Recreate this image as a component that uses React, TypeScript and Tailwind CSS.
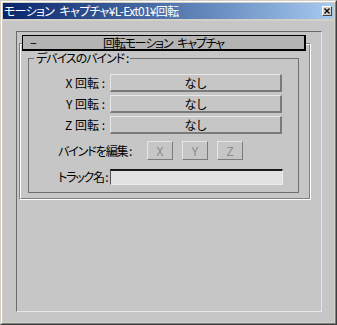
import React from "react";

const font = "font-['Noto_Sans_CJK_JP',sans-serif] [font-feature-settings:'palt']";

function NoneButton() {
  return (
    <div className="w-[172px] h-[18px] flex items-center justify-center border-t border-l border-t-[#e8e8e8] border-l-[#e8e8e8] border-r-2 border-b-2 border-r-[#7a7a7a] border-b-[#7a7a7a] bg-[#c6c6c6] text-[12px] leading-none text-black">
      なし
    </div>
  );
}

function AxisButton({ label }: { label: string }) {
  return (
    <div className="w-[26px] h-[19px] flex items-center justify-center border-t border-l border-t-[#e6e6e6] border-l-[#e6e6e6] border-r border-b border-r-[#7c7c7c] border-b-[#7c7c7c] text-[12px] leading-none text-[#8c8c8c]">
      {label}
    </div>
  );
}

export default function App() {
  return (
    <div className={`${font} w-[337px] h-[325px] flex flex-col border border-t-[#d4d0c8] border-l-[#d4d0c8] border-r-[#404040] border-b-[#404040]`}>
      <div className="flex-1 flex flex-col border border-t-white border-l-white border-r-[#808080] border-b-[#808080] bg-[#d4d0c8] p-px">
        {/* Title bar */}
        <div className="h-[16px] flex items-center justify-between bg-gradient-to-r from-[#0a246a] to-[#a6caf0] pl-[1px] pr-[2px]">
          <span className="text-white text-[12px] leading-none whitespace-nowrap tracking-[-0.7px]">
            モーション{"\u2002"}キャプチャ¥L-Ext01¥回転
          </span>
          <div className="w-[10px] h-[10px] flex items-center justify-center bg-[#d4d0c8] border-t border-l border-t-white border-l-white border-r border-b border-r-[#404040] border-b-[#404040]">
            <svg width="6" height="6" viewBox="0 0 6 6">
              <path d="M0.5 0.5 L5.5 5.5 M5.5 0.5 L0.5 5.5" stroke="#000" strokeWidth="1.2" />
            </svg>
          </div>
        </div>
        {/* Body */}
        <div className="mt-[2px] flex-1 flex flex-col bg-[#c6c6c6] pt-[10px] pl-[13px] pr-[12px] pb-[10px]">
          <div className="flex-1 border-l border-t border-l-[#6a6a6a] border-t-[#6a6a6a] border-r border-b border-r-[#e6e6e6] border-b-[#e6e6e6] pt-[3px] pl-[2px]">
            <div className="w-[292px]">
              {/* Rollout header */}
              <div className="relative z-10 ml-[3px] w-[284px] h-[16px] flex items-center bg-[#b4b4b4] border-l border-t border-black border-r-2 border-b-2 text-[12px] leading-none text-black">
                <span className="pl-[7px] w-[20px]">−</span>
                <span className="flex-1 text-center pr-[20px] whitespace-nowrap tracking-[-1.2px]">回転モーション{"\u2002"}キャプチャ</span>
              </div>
              {/* Rollout frame */}
              <div className="-mt-[8px] border-l border-t border-l-[#808080] border-t-[#808080] border-r border-b border-r-white border-b-white">
                <div className="border-l border-t border-l-white border-t-white border-r border-b border-r-[#808080] border-b-[#808080] pt-[6px] pl-[7px] pr-[10px] pb-[5px]">
                  <fieldset className="border border-[#707070] pb-[7px]">
                    <legend className="ml-[5px] px-[2px] text-[12px] leading-[14px] text-black whitespace-nowrap tracking-[-1px]">
                      デバイスのバインド :
                    </legend>
                    <div className="pt-[9px] flex flex-col gap-[3px]">
                      {["X", "Y", "Z"].map((a) => (
                        <div key={a} className="flex items-center">
                          <div className="w-[77px] text-right text-[12px] leading-none text-black pr-[1px] whitespace-nowrap">
                            {a} 回転 :
                          </div>
                          <div className="ml-[4px]">
                            <NoneButton />
                          </div>
                        </div>
                      ))}
                    </div>
                    <div className="mt-[7px] flex items-center pl-[29px]">
                      <div className="w-[89px] text-[12px] leading-none text-black whitespace-nowrap tracking-[-1.1px]">バインドを編集 :</div>
                      <div className="flex gap-[9px]">
                        <AxisButton label="X" />
                        <AxisButton label="Y" />
                        <AxisButton label="Z" />
                      </div>
                    </div>
                    <div className="mt-[9px] flex items-center pl-[29px]">
                      <div className="w-[52px] text-[12px] leading-none text-black whitespace-nowrap tracking-[-1.2px]">トラック名 :</div>
                      <div className="w-[173px] h-[16px] bg-[#e2e2e2] border-t-2 border-l border-t-[#1a1a1a] border-l-[#505050] border-r border-b border-r-[#ececec] border-b-[#ececec]" />
                    </div>
                  </fieldset>
                </div>
              </div>
            </div>
          </div>
        </div>
      </div>
    </div>
  );
}
